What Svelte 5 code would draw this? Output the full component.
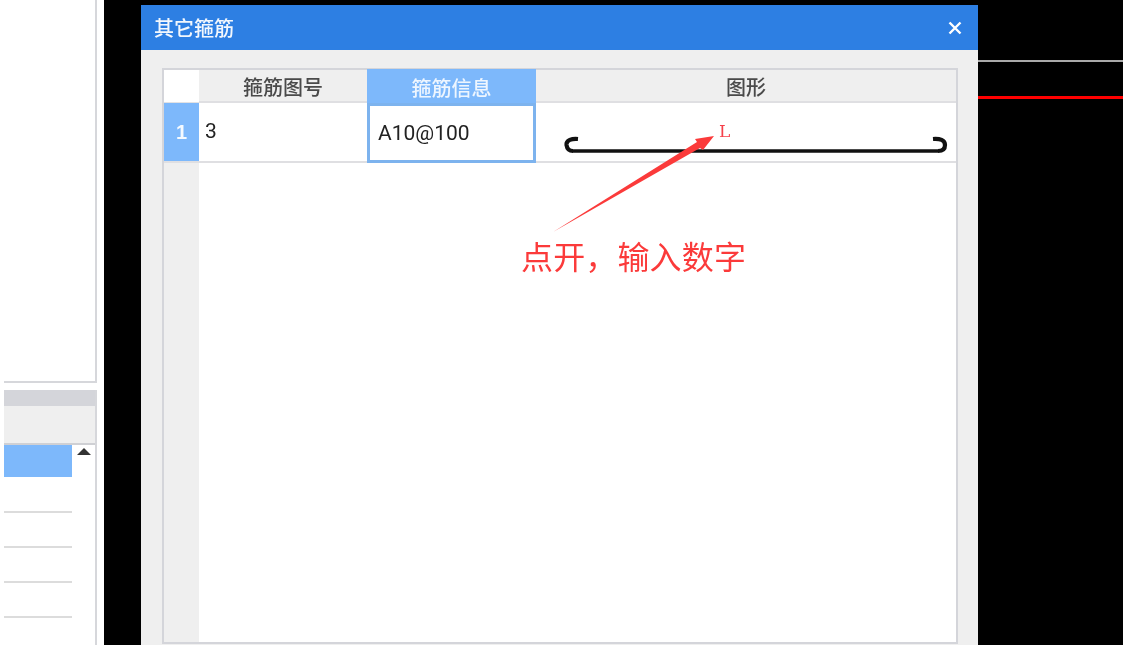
<script>
	const columns = [
		{ label: '箍筋图号', value: '3' },
		{ label: '箍筋信息', value: 'A10@100', active: true }
	]
	// the list rows in the panel behind the dialog
	const side_rows = [0, 1, 2, 3]
</script>

<div class="page">
	<aside class="side">
		<div class="side-top"></div>
		<div class="side-list">
			<div class="list-bar"></div>
			<div class="list-head"></div>
			<div class="list-body">
				<div class="list-rows">
					<div class="row-selected"></div>
					{#each side_rows as r (r)}
					<div class="row-line"></div>
					{/each}
				</div>
				<div class="scroll-up"></div>
			</div>
		</div>
	</aside>

	<section class="dialog">
		<header class="title">
			<span>其它箍筋</span>
			<svg class="close" width="14" height="14" viewBox="0 0 14 14">
				<path d="M1.5 1.5 L12.5 12.5 M12.5 1.5 L1.5 12.5" stroke="#fff" stroke-width="2.4" fill="none" />
			</svg>
		</header>
		<div class="body">
			<div class="grid">
				<div class="corner"></div>
				{#each columns as col}
				<div class="head" class:active={col.active}>{col.label}</div>
				{/each}
				<div class="head last">图形</div>

				<div class="row-no">1</div>
				{#each columns as col}
				<div class="cell" class:active={col.active}>{col.value}</div>
				{/each}
				<div class="cell shape">
					<svg width="420" height="59" viewBox="0 0 420 59">
						<path d="M37 48 L402 48" fill="none" stroke="#111" stroke-width="3.400" />
						<path d="M42 36 C36 35.500 30 37 30.500 42 C31 45.500 33 48 37 48" fill="none" stroke="#111" stroke-width="4.200" />
						<path d="M397 36 C404 35.500 409 37 409 42 C409 45.500 407 48 402 48" fill="none" stroke="#111" stroke-width="4.200" />
						<text x="183" y="33.500" class="dim">L</text>
					</svg>
				</div>

				<div class="gutter"></div>
				<div class="empty"></div>
			</div>
		</div>
	</section>

	<div class="canvas">
		<div class="line-grey"></div>
		<div class="line-red"></div>
	</div>

	<svg class="arrow" width="180" height="110" viewBox="0 0 180 110">
		<path d="M0 100 L144 10 L142 7 L161 4 L150 18 L147 16 Z" fill="#fb3a3a" />
	</svg>
	<div class="note">点开，输入数字</div>
</div>

<style>
:global(body) {
	background: #000;
}
* {
	box-sizing: border-box;
}
.page {
	position: relative;
	display: flex;
	width: 1123px;
	height: 645px;
	overflow: hidden;
	background: #000;
	font-family: "Noto Sans CJK SC", "Liberation Sans", sans-serif;
	/* the reference is an upscaled, slightly soft screenshot */
	filter: blur(0.45px);
}
.side {
	width: 104px;
	flex-shrink: 0;
	padding-left: 4px;
	padding-right: 7px;
	background: #fff;
}
.side-top {
	height: 383px;
	border-right: 2px solid #d6d7db;
	border-bottom: 2px solid #d6d7db;
}
.side-list {
	margin-top: 7px;
	border-right: 2px solid #d6d7db;
}
.list-bar {
	height: 16px;
	background: #d4d5da;
}
.list-head {
	height: 37px;
	background: #efefef;
	border-bottom: 2px solid #cfd0d4;
	box-sizing: content-box;
}
.list-body {
	display: flex;
	height: 200px;
}
.list-rows {
	width: 68px;
}
.row-selected {
	height: 32px;
	background: #7db8fb;
}
.row-line {
	height: 35px;
	border-bottom: 2px solid #dcdcdc;
}
.row-selected + .row-line {
	height: 36px;
}
.scroll-up {
	width: 0;
	height: 0;
	margin: 3px 0 0 5px;
	border-left: 7px solid transparent;
	border-right: 7px solid transparent;
	border-bottom: 7px solid #333;
}
.dialog {
	display: flex;
	flex-direction: column;
	width: 837px;
	height: 640px;
	margin: 5px 0 0 37px;
	flex-shrink: 0;
	background: #efefef;
}
.title {
	display: flex;
	align-items: center;
	justify-content: space-between;
	height: 45px;
	padding: 0 16px 0 13px;
	background: #2d7fe3;
	color: #f2f7fd;
	font-size: 20px;
	font-weight: 500;
}
.body {
	flex: 1;
	min-height: 0;
	padding: 18px 20px 1px 21px;
}
.grid {
	display: grid;
	grid-template-columns: 35px 168px 169px 1fr;
	grid-template-rows: 33px 60px 1fr;
	height: 100%;
	border: 2px solid #d4d5da;
	background: #fff;
}
.corner {
	background: #fff;
	border-bottom: 1px solid #e2e2e4;
}
.head {
	display: flex;
	align-items: center;
	justify-content: center;
	padding-top: 1px;
	background: #efefef;
	color: #4a4a4a;
	font-size: 20px;
	font-weight: 500;
	border-bottom: 2px solid #dfdfe2;
}
.head.active {
	background: #7db8fb;
	color: #eef6ff;
	border: 2px solid #7db8fb;
	border-bottom: 0;
	margin-top: -1px;
}
.row-no {
	display: flex;
	align-items: center;
	justify-content: center;
	background: #7db8fb;
	color: #f5faff;
	font: bold 20px "Liberation Sans", sans-serif;
	border-bottom: 2px solid #dfdfe2;
}
.cell {
	display: flex;
	align-items: center;
	padding-left: 6px;
	padding-bottom: 2px;
	background: #fff;
	color: #222;
	font: 21px "Roboto", "Liberation Sans", sans-serif;
	border-bottom: 2px solid #dfdfe2;
}
.cell.active {
	padding-left: 8px;
	border: 3px solid #7db3ee;
	padding-bottom: 0;
}
.cell.shape {
	padding: 0;
	align-items: flex-start;
}
.dim {
	fill: #f5404a;
	font: 17px "DejaVu Serif", serif;
}
.gutter {
	background: #efefef;
}
.empty {
	grid-column: 2 / -1;
	background: #fff;
}
.canvas {
	flex: 1;
	padding-top: 60px;
}
.line-grey {
	height: 2px;
	background: #a9a9a9;
}
.line-red {
	height: 3px;
	margin-top: 34px;
	background: #f00;
}
/* annotations drawn on top of the screenshot */
.arrow {
	position: absolute;
	left: 553px;
	top: 132px;
}
.note {
	position: absolute;
	left: 521px;
	top: 232px;
	color: #fb3a3a;
	font-size: 32px;
	letter-spacing: 0.15px;
	line-height: 46px;
	white-space: nowrap;
}
</style>
